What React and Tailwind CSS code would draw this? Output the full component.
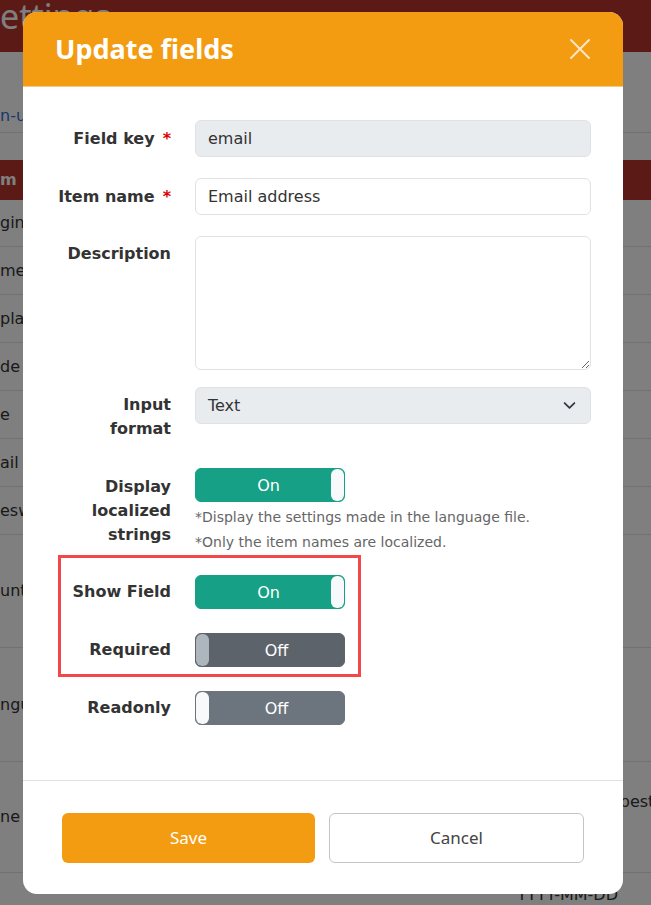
import { useState } from 'react'

const body = "font-['DejaVu_Sans',Verdana,sans-serif]"
const ui = "font-['Noto_Sans','Open_Sans',sans-serif]"

// rows of the settings table behind the dialog (only their left edge shows)
const rows = [
  { h: 'h-[47px]', left: 'gin' },
  { h: 'h-[48px]', left: 'me' },
  { h: 'h-[48px]', left: 'pla' },
  { h: 'h-[48px]', left: 'de' },
  { h: 'h-[48px]', left: 'e' },
  { h: 'h-[48px]', left: 'ail' },
  { h: 'h-[48px]', left: 'esw' },
  { h: 'h-[113px]', left: 'unt' },
  { h: 'h-[114px]', left: 'ngu' },
  { h: 'h-[111px]', left: 'ne z', right: 'Europe/Budapest' },
  { h: 'h-[48px]', left: '', right: 'YYYY-MM-DD', low: true },
]

function Background() {
  return (
    <div className={`${body} text-[16px] text-[#333]`}>
      <div className="h-[52px] overflow-hidden bg-[#b8342c]">
        <div className={`${ui} mt-[-1px] text-[34px] leading-none text-white`}>ettings</div>
      </div>
      <div className="h-[48px]" />
      <div className="flex h-[33px] items-center border-b border-[#dee2e6] text-[#2f6fd1]">n-u</div>
      <div className="h-[27px]" />
      <div className="flex h-[40px] items-center bg-[#b8342c] font-bold text-white">m</div>
      {rows.map((r, i) => (
        <div key={i} className={`grid grid-cols-[517px_1fr] border-b border-[#dee2e6] ${r.h}`}>
          <div className="flex items-center whitespace-nowrap">{r.left}</div>
          <div className={r.low ? 'whitespace-nowrap pt-[10px]' : 'whitespace-nowrap pt-[28px]'}>{r.right}</div>
        </div>
      ))}
    </div>
  )
}

function Label({ children, required }) {
  return (
    <div className="flex w-[116px] shrink-0 justify-end text-right text-[16px] font-bold leading-[24px] text-[#333]">
      <span>{children}</span>
      {required && <span className="ml-[8px] text-[#e00000]">*</span>}
    </div>
  )
}

function ToggleOn() {
  return (
    <div className="flex h-[34px] w-[150px] overflow-hidden rounded-[6px] border border-[#16a085] bg-[#16a085]">
      <span className="flex flex-1 items-center justify-center pl-[10px] pt-[2px] text-[16px] text-white">On</span>
      <span className="w-[13px] rounded-[6px] bg-[#f8f9fa]" />
    </div>
  )
}

function ToggleOff({ dark }) {
  return (
    <div
      className={
        dark
          ? 'flex h-[34px] w-[150px] overflow-hidden rounded-[6px] border border-[#5c636a] bg-[#5c636a]'
          : 'flex h-[34px] w-[150px] overflow-hidden rounded-[6px] border border-[#6c757d] bg-[#6c757d]'
      }
    >
      <span className={dark ? 'w-[13px] rounded-[6px] bg-[#adb5bd]' : 'w-[13px] rounded-[6px] bg-[#f8f9fa]'} />
      <span className="flex flex-1 items-center justify-center pt-[2px] text-[16px] text-white">Off</span>
    </div>
  )
}

export default function App() {
  const [name, setName] = useState('Email address')

  return (
    <div className="relative h-[905px] w-full overflow-hidden bg-white">
      <Background />

      {/* overlay */}
      <div className="absolute inset-0 bg-black/50" />

      <div className="absolute inset-0 pl-[23px] pt-[12px]">
        <div className={`${body} w-[600px] overflow-hidden rounded-[14px] bg-white`}>
          {/* header */}
          <div className="flex h-[75px] items-center justify-between border-b border-[#f3c98a] bg-[#f39c12] px-[32px]">
            <h2 className={`${ui} text-[27px] font-bold text-white`}>Update fields</h2>
            <button type="button" className="text-[#fce6c4]">
              <svg width="22" height="22" viewBox="0 0 22 22" fill="none" stroke="currentColor" strokeWidth="2" strokeLinecap="round">
                <path d="M2 2l18 18M20 2L2 20" />
              </svg>
            </button>
          </div>

          {/* body */}
          <div className="px-[32px] pb-[55px] pt-[33px]">
            <div className="mb-[21px] flex items-start gap-[24px]">
              <div className="pt-[7px]"><Label required>Field key</Label></div>
              <input
                readOnly
                value="email"
                className="h-[37px] flex-1 rounded-[6px] border border-[#dee2e6] bg-[#e9ecef] px-[12px] text-[16px] text-[#333] outline-none"
              />
            </div>

            <div className="mb-[21px] flex items-start gap-[24px]">
              <div className="pt-[7px]"><Label required>Item name</Label></div>
              <input
                value={name}
                onChange={(e) => setName(e.target.value)}
                className="h-[37px] flex-1 rounded-[6px] border border-[#dee2e6] bg-white px-[12px] text-[16px] text-[#333] outline-none"
              />
            </div>

            <div className="mb-[17px] flex items-start gap-[24px]">
              <div className="pt-[6px]"><Label>Description</Label></div>
              <textarea className="h-[134px] flex-1 rounded-[6px] border border-[#dee2e6] bg-white px-[12px] py-[6px] text-[16px] outline-none" />
            </div>

            <div className="mb-[27px] flex items-start gap-[24px]">
              <div className="pt-[6px]"><Label>Input<br />format</Label></div>
              <div className="flex h-[37px] flex-1 items-center justify-between rounded-[6px] border border-[#dee2e6] bg-[#e9ecef] pl-[12px] pr-[14px] text-[16px] text-[#333]">
                <span>Text</span>
                <svg width="13" height="13" viewBox="0 0 16 16" fill="none" stroke="#343a40" strokeWidth="2.2" strokeLinecap="round" strokeLinejoin="round">
                  <path d="M2 5l6 6 6-6" />
                </svg>
              </div>
            </div>

            <div className="mb-[20px] flex items-start gap-[24px]">
              <div className="pt-[7px]"><Label>Display<br />localized<br />strings</Label></div>
              <div className="flex-1">
                <ToggleOn />
                <div className="mt-[3px] text-[14px] leading-[25px] text-[#666]">
                  <div>*Display the settings made in the language file.</div>
                  <div>*Only the item names are localized.</div>
                </div>
              </div>
            </div>

            <div className="relative">
              <div className="pointer-events-none absolute -bottom-[10px] -top-[20px] left-[3px] w-[303px] border-[3px] border-[#f2484a]" />
              <div className="mb-[24px] flex items-center gap-[24px]">
                <Label>Show Field</Label>
                <ToggleOn />
              </div>
              <div className="flex items-center gap-[24px]">
                <Label>Required</Label>
                <ToggleOff dark />
              </div>
            </div>

            <div className="mt-[24px] flex items-center gap-[24px]">
              <Label>Readonly</Label>
              <ToggleOff />
            </div>
          </div>

          {/* footer */}
          <div className="flex gap-[14px] border-t border-[#dee2e6] px-[39px] pb-[31px] pt-[32px]">
            <button type="button" className={`${ui} h-[50px] flex-1 rounded-[6px] bg-[#f39c12] text-[17px] text-white`}>
              Save
            </button>
            <button type="button" className={`${ui} h-[50px] flex-1 rounded-[6px] border border-[#c4c4c4] bg-white text-[17px] text-[#444]`}>
              Cancel
            </button>
          </div>
        </div>
      </div>
    </div>
  )
}
